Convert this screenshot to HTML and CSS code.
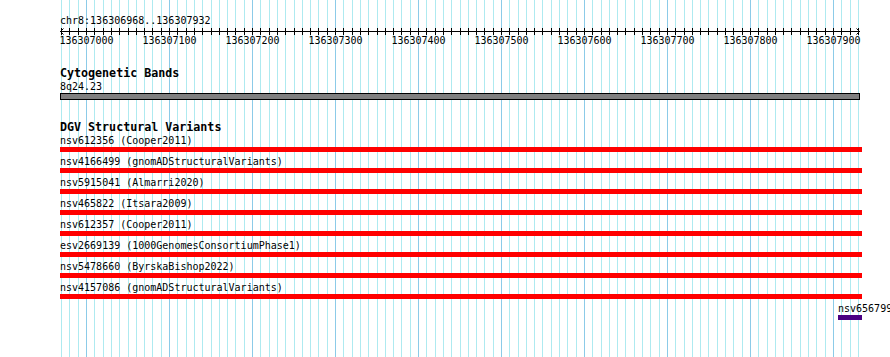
FILE: index.html
```html
<!DOCTYPE html>
<html lang="en">
<head>
    <meta charset="UTF-8">
    <title>chr8:136306968..136307932</title>
    <link rel="stylesheet" href="styles.css">
</head>
<body>
    <div class="panel">
        <!-- grid lines, drawn by the script below -->
        <svg class="grid" id="grid" width="830" height="357"></svg>

        <div class="tracks">
            <!-- Ruler -->
            <div class="ruler">
                <div class="ruler-name">chr8:136306968..136307932</div>
                <svg class="ruler-scale" id="ruler" width="830" height="20"></svg>
            </div>

            <!-- Cytogenetic Bands -->
            <div class="track track-bands">
                <div class="track-title">Cytogenetic Bands</div>
                <div class="feature-label">8q24.23</div>
                <div class="band"></div>
            </div>

            <!-- DGV Structural Variants -->
            <div class="track track-dgv">
                <div class="track-title">DGV Structural Variants</div>
                <div class="variant">
                    <div class="feature-label">nsv612356 (Cooper2011)</div>
                    <div class="bar"></div>
                </div>
                <div class="variant">
                    <div class="feature-label">nsv4166499 (gnomADStructuralVariants)</div>
                    <div class="bar"></div>
                </div>
                <div class="variant">
                    <div class="feature-label">nsv5915041 (Almarri2020)</div>
                    <div class="bar"></div>
                </div>
                <div class="variant">
                    <div class="feature-label">nsv465822 (Itsara2009)</div>
                    <div class="bar"></div>
                </div>
                <div class="variant">
                    <div class="feature-label">nsv612357 (Cooper2011)</div>
                    <div class="bar"></div>
                </div>
                <div class="variant">
                    <div class="feature-label">esv2669139 (1000GenomesConsortiumPhase1)</div>
                    <div class="bar"></div>
                </div>
                <div class="variant">
                    <div class="feature-label">nsv5478660 (ByrskaBishop2022)</div>
                    <div class="bar"></div>
                </div>
                <div class="variant">
                    <div class="feature-label">nsv4157086 (gnomADStructuralVariants)</div>
                    <div class="bar"></div>
                </div>
                <div class="variant variant-gain" style="margin-left: 778px">
                    <div class="feature-label">nsv656799</div>
                    <div class="bar" style="width: 24px"></div>
                </div>
            </div>
        </div>
    </div>

    <script>
        var start = 136306968, end = 136307932, width = 800;
        var scale = width / (end - start);
        var ns = "http://www.w3.org/2000/svg";

        function xAt(bp) {
            return Math.floor((bp - start) * scale);
        }

        function add(svg, tag, attrs, text) {
            var el = document.createElementNS(ns, tag);
            for (var k in attrs) el.setAttribute(k, attrs[k]);
            if (text) el.textContent = text;
            svg.appendChild(el);
            return el;
        }

        var grid = document.getElementById("grid");
        var ruler = document.getElementById("ruler");

        // ruler line with arrows at both ends
        add(ruler, "line", { x1: 0, y1: 4.5, x2: width, y2: 4.5, "class": "axis" });
        add(ruler, "polyline", { points: "3.5,1.5 0.5,4.5 3.5,7.5", "class": "axis" });
        add(ruler, "polyline", { points: (width - 3.5) + ",1.5 " + (width - 0.5) + ",4.5 " + (width - 3.5) + ",7.5", "class": "axis" });

        for (var bp = Math.ceil(start / 10) * 10; bp <= end; bp += 10) {
            var x = xAt(bp) + 0.5;
            var major = bp % 100 === 0;
            add(grid, "line", { x1: x, y1: 0, x2: x, y2: 357, "class": major ? "grid-major" : "grid-minor" });
            add(ruler, "line", { x1: x, y1: 1, x2: x, y2: 8, "class": "axis" });
            if (major) {
                add(ruler, "text", { x: x, y: 16.5, "class": "tick-label" }, String(bp));
            }
        }
    </script>
</body>
</html>
```

FILE: styles.css
```css
body {
    margin: 0;
    background: white;
    font-family: "DejaVu Sans Mono", "Liberation Mono", monospace;
    font-size: 10px;
    color: black;
    overflow: hidden;
}
.panel {
    position: relative;
    width: 890px;
    height: 357px;
    overflow: hidden;
}
.grid {
    position: absolute;
    left: 60px;
    top: 0;
}
.grid-minor { stroke: #aeeaf0; stroke-width: 1; }
.grid-major { stroke: #8ccbe8; stroke-width: 1; }

.tracks {
    position: relative;
    padding-left: 60px;
}
.ruler { padding-top: 15px; }
.ruler-name { line-height: 12px; white-space: nowrap; }
.ruler-scale { display: block; overflow: visible; }
.axis { stroke: black; stroke-width: 1; fill: none; }
.tick-label {
    font-family: "DejaVu Sans Mono", "Liberation Mono", monospace;
    font-size: 10px;
    text-anchor: middle;
    fill: black;
}

.track-title {
    font-weight: bold;
    font-size: 11.67px;
    line-height: 13px;
    white-space: nowrap;
}
.feature-label {
    line-height: 13px;
    white-space: nowrap;
}
.track-bands { margin-top: 20px; }
.band {
    width: 798px;
    height: 5px;
    background: #808080;
    border: 1px solid black;
}
.track-dgv { margin-top: 21px; }
.variant { margin-bottom: 3px; }
.bar {
    width: 802px;
    height: 5px;
    background: #ff0000;
}
.variant-gain .bar { background: #4b0082; }
```
